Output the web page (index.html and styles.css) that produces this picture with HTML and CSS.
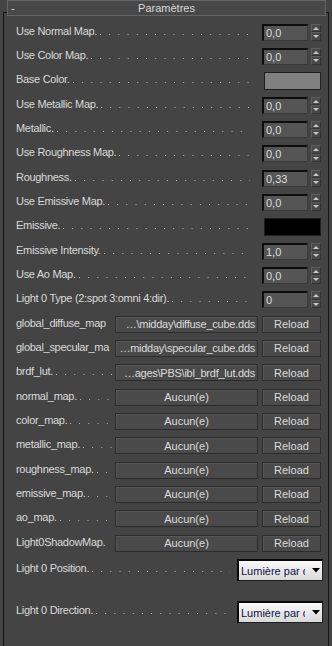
FILE: index.html
```html
<!DOCTYPE html>
<html lang="fr">
<head>
    <meta charset="UTF-8">
    <title>Paramètres</title>
    <link rel="stylesheet" href="styles.css">
</head>
<body>

    <div class="rollout">
        <div class="header">
            <span class="minus">-</span>
            <span class="title">Paramètres</span>
        </div>

        <div class="group">
            <div class="row">
                <div class="label"><span>Use Normal Map.</span><span class="leader"></span></div>
                <input class="num" type="text" value="0,0">
                <div class="spin"><span class="up"></span><span class="down"></span></div>
            </div>
            <div class="row">
                <div class="label"><span>Use Color Map.</span><span class="leader"></span></div>
                <input class="num" type="text" value="0,0">
                <div class="spin"><span class="up"></span><span class="down"></span></div>
            </div>
            <div class="row">
                <div class="label"><span>Base Color.</span><span class="leader"></span></div>
                <div class="swatch gray"></div>
            </div>
            <div class="row">
                <div class="label"><span>Use Metallic Map.</span><span class="leader"></span></div>
                <input class="num" type="text" value="0,0">
                <div class="spin"><span class="up"></span><span class="down"></span></div>
            </div>
            <div class="row">
                <div class="label"><span>Metallic.</span><span class="leader"></span></div>
                <input class="num" type="text" value="0,0">
                <div class="spin"><span class="up"></span><span class="down"></span></div>
            </div>
            <div class="row">
                <div class="label"><span>Use Roughness Map.</span><span class="leader"></span></div>
                <input class="num" type="text" value="0,0">
                <div class="spin"><span class="up"></span><span class="down"></span></div>
            </div>
            <div class="row">
                <div class="label"><span>Roughness.</span><span class="leader"></span></div>
                <input class="num" type="text" value="0,33">
                <div class="spin"><span class="up"></span><span class="down"></span></div>
            </div>
            <div class="row">
                <div class="label"><span>Use Emissive Map.</span><span class="leader"></span></div>
                <input class="num" type="text" value="0,0">
                <div class="spin"><span class="up"></span><span class="down"></span></div>
            </div>
            <div class="row">
                <div class="label"><span>Emissive.</span><span class="leader"></span></div>
                <div class="swatch black"></div>
            </div>
            <div class="row">
                <div class="label"><span>Emissive Intensity.</span><span class="leader"></span></div>
                <input class="num" type="text" value="1,0">
                <div class="spin"><span class="up"></span><span class="down"></span></div>
            </div>
            <div class="row">
                <div class="label"><span>Use Ao Map.</span><span class="leader"></span></div>
                <input class="num" type="text" value="0,0">
                <div class="spin"><span class="up"></span><span class="down"></span></div>
            </div>
            <div class="row">
                <div class="label"><span>Light 0 Type (2:spot 3:omni 4:dir).</span><span class="leader"></span></div>
                <input class="num" type="text" value="0">
                <div class="spin"><span class="up"></span><span class="down"></span></div>
            </div>

            <div class="row">
                <div class="label short"><span>global_diffuse_map</span></div>
                <button class="file">…\midday\diffuse_cube.dds</button>
                <button class="reload">Reload</button>
            </div>
            <div class="row">
                <div class="label short"><span>global_specular_ma</span></div>
                <button class="file">…midday\specular_cube.dds</button>
                <button class="reload">Reload</button>
            </div>
            <div class="row">
                <div class="label short"><span>brdf_lut.</span><span class="leader"></span></div>
                <button class="file">…ages\PBS\ibl_brdf_lut.dds</button>
                <button class="reload">Reload</button>
            </div>
            <div class="row">
                <div class="label short"><span>normal_map.</span><span class="leader"></span></div>
                <button class="file center">Aucun(e)</button>
                <button class="reload">Reload</button>
            </div>
            <div class="row">
                <div class="label short"><span>color_map.</span><span class="leader"></span></div>
                <button class="file center">Aucun(e)</button>
                <button class="reload">Reload</button>
            </div>
            <div class="row">
                <div class="label short"><span>metallic_map.</span><span class="leader"></span></div>
                <button class="file center">Aucun(e)</button>
                <button class="reload">Reload</button>
            </div>
            <div class="row">
                <div class="label short"><span>roughness_map.</span><span class="leader"></span></div>
                <button class="file center">Aucun(e)</button>
                <button class="reload">Reload</button>
            </div>
            <div class="row">
                <div class="label short"><span>emissive_map.</span><span class="leader"></span></div>
                <button class="file center">Aucun(e)</button>
                <button class="reload">Reload</button>
            </div>
            <div class="row">
                <div class="label short"><span>ao_map.</span><span class="leader"></span></div>
                <button class="file center">Aucun(e)</button>
                <button class="reload">Reload</button>
            </div>
            <div class="row">
                <div class="label short"><span>Light0ShadowMap.</span></div>
                <button class="file center">Aucun(e)</button>
                <button class="reload">Reload</button>
            </div>

            <div class="drops">
                <div class="row-drop">
                    <div class="label"><span>Light 0 Position.</span><span class="leader"></span></div>
                    <div class="combo">
                        <span class="combo-text">Lumière par d</span>
                        <svg class="combo-arrow" width="8" height="5" viewBox="0 0 8 5"><path d="M0 0H8L4 4.5Z" fill="#000"/></svg>
                    </div>
                </div>
                <div class="row-drop">
                    <div class="label"><span>Light 0 Direction.</span><span class="leader"></span></div>
                    <div class="combo">
                        <span class="combo-text">Lumière par d</span>
                        <svg class="combo-arrow" width="8" height="5" viewBox="0 0 8 5"><path d="M0 0H8L4 4.5Z" fill="#000"/></svg>
                    </div>
                </div>
            </div>
        </div>
    </div>

</body>
</html>
```

FILE: styles.css
```css
body {
    margin: 0;
    background-color: #444444;
    font-family: "Liberation Sans", Arial, sans-serif;
    font-size: 11px;
    color: #dadada;
    height: 646px;
    overflow: hidden;
}

.rollout {
    display: flex;
    flex-direction: column;
    height: 100%;
}

/* barre de titre du rollout */
.header {
    position: relative;
    z-index: 1;
    height: 14px;
    margin: 0 6px -4px 7px;
    border: 1px solid #646464;
    background-color: #484848;
    display: flex;
    align-items: center;
    justify-content: center;
}

.minus {
    position: absolute;
    left: 3px;
    top: 0;
    line-height: 14px;
}

.title {
    line-height: 14px;
}

.group {
    flex: 1;
    margin: 0 3px;
    border: 1px solid #141414;
    border-bottom: none;
    padding: 7px 7px 0 12px;
}

.row {
    height: 24.33px;
    display: flex;
    align-items: center;
}

.label {
    flex: 1;
    display: flex;
    align-items: baseline;
    white-space: nowrap;
    overflow: hidden;
    letter-spacing: -0.3px;
    margin-right: 12px;
    margin-bottom: 3px;
}

.label.short {
    flex: none;
    width: 96px;
    margin-right: 3px;
}

.leader {
    flex: 1;
    height: 1px;
    margin-left: 3px;
    background-image: linear-gradient(to right, #c0c0c0 1px, transparent 1px);
    background-size: 9.2px 1px;
    background-repeat: repeat-x;
}

.num {
    width: 46px;
    height: 17px;
    box-sizing: border-box;
    margin: 0;
    padding: 0 0 0 2px;
    background-color: #555555;
    border-style: solid;
    border-width: 2px 1px 1px 2px;
    border-color: #0e0e0e #3a3a3a #3a3a3a #0e0e0e;
    color: #dcdcdc;
    font-family: inherit;
    font-size: 11px;
    outline: none;
}

.spin {
    width: 10px;
    height: 17px;
    margin-left: 3px;
    display: flex;
    flex-direction: column;
}

.spin span {
    flex: 1;
    position: relative;
    background-color: #4a4a4a;
    border: 1px solid #5e5e5e;
    border-right-color: #333;
    border-bottom-color: #333;
}

.spin span::after {
    content: "";
    position: absolute;
    left: 1px;
    border-left: 3px solid transparent;
    border-right: 3px solid transparent;
}

.spin .up::after {
    top: 2px;
    border-bottom: 3px solid #c8c8c8;
}

.spin .down::after {
    top: 2px;
    border-top: 3px solid #c8c8c8;
}

.swatch {
    width: 57px;
    height: 18px;
    box-sizing: border-box;
    border: 1px solid #1e1e1e;
}

.swatch.gray {
    background-color: #808080;
}

.swatch.black {
    background-color: #000;
}

button {
    height: 17px;
    box-sizing: border-box;
    margin: 0;
    padding: 0 2px;
    background-color: #4a4a4a;
    border: 1px solid #2c2c2c;
    box-shadow: inset 1px 1px #575757;
    color: #dcdcdc;
    font-family: inherit;
    font-size: 11px;
    white-space: nowrap;
    overflow: hidden;
}

.file {
    width: 143px;
    text-align: right;
    letter-spacing: -0.25px;
}

.file.center {
    text-align: center;
    letter-spacing: 0;
}

.reload {
    width: 59px;
    margin-left: 4px;
}

.drops {
    display: flex;
    flex-direction: column;
    gap: 20px;
    margin-top: 4px;
}

.row-drop {
    height: 22px;
    display: flex;
    align-items: center;
}

.row-drop .label {
    margin-right: 7px;
    margin-bottom: 5px;
}

.combo {
    width: 86px;
    height: 22px;
    box-sizing: border-box;
    margin-right: -2px;
    display: flex;
    align-items: center;
    border-style: solid;
    border-width: 2px 1px 1px 2px;
    border-color: #080808 #1e1e1e #1e1e1e #080808;
    background: linear-gradient(#fafafa, #d8d8d8);
}

.combo-text {
    width: 64px;
    overflow: hidden;
    white-space: nowrap;
    padding-left: 2px;
    color: #10104a;
    font-size: 11px;
}

.combo-arrow {
    margin-left: 7px;
}
```
